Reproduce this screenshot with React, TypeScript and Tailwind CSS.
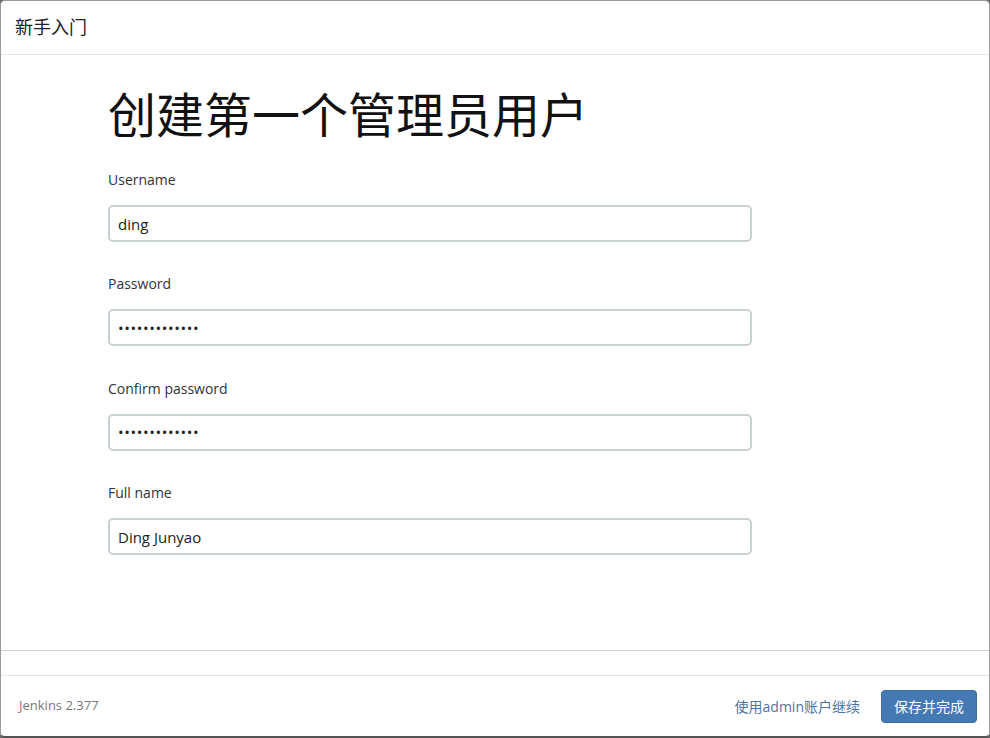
import React from 'react';

const fields = [
  { label: 'Username', value: 'ding', type: 'text' },
  { label: 'Password', value: 'abcdefghijklm', type: 'password' },
  { label: 'Confirm password', value: 'abcdefghijklm', type: 'password' },
  { label: 'Full name', value: 'Ding Junyao', type: 'text' },
];

export default function App() {
  return (
    <div
      className="w-[990px] h-[738px] bg-[#6b6b6b] overflow-hidden"
      style={{ fontFamily: '"Open Sans", "Noto Sans CJK SC", sans-serif' }}
    >
      <div className="h-full flex flex-col bg-white border border-[#9a9a9a] border-b-2 border-b-[#555] rounded-[5px] overflow-hidden">
        {/* header */}
        <div className="h-[54px] shrink-0 flex items-center px-[14px] border-b border-[#e5e5e5]">
          <span className="text-[18px] text-[#222]">新手入门</span>
        </div>

        {/* body */}
        <div className="flex-1 pl-[107px] pt-[28px] border-b border-[#cfcfcf]">
          <h1 className="text-[48px] leading-[64px] text-[#111] font-normal mb-[23px]">创建第一个管理员用户</h1>
          <div className="flex flex-col gap-[32.4px] w-[644px]">
            {fields.map((f) => (
              <div key={f.label} className="flex flex-col">
                <label className="text-[14px] leading-[20px] text-[#333] mb-[15px]">{f.label}</label>
                <input
                  readOnly
                  type={f.type}
                  value={f.value}
                  className={
                    'h-[37px] w-full border-2 border-[#c9d0d4] rounded-[5px] px-[8px] text-[15px] text-[#222] outline-none ' +
                    (f.type === 'password' ? 'tracking-[0.6px]' : '')
                  }
                />
              </div>
            ))}
          </div>
        </div>

        {/* spacer */}
        <div className="h-[25px] shrink-0 border-b border-[#e5e5e5]" />

        {/* footer */}
        <div className="h-[60px] shrink-0 flex items-center justify-between pl-[18px] pr-[12px]">
          <span className="text-[13px] text-[#777]">Jenkins 2.377</span>
          <div className="flex items-center gap-[21px]">
            <a className="text-[14px] text-[#4d74a3]">使用admin账户继续</a>
            <button className="h-[33px] px-[12px] bg-[#4479b3] text-white text-[14px] rounded-[4px] border border-[#3b6ea5]">
              保存并完成
            </button>
          </div>
        </div>
      </div>
    </div>
  );
}
